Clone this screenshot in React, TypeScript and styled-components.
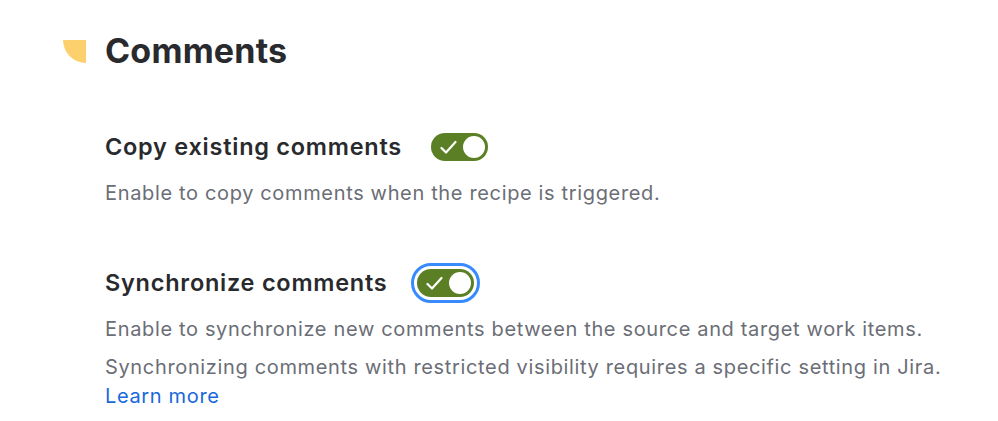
import React, { useState } from "react";
import styled, { createGlobalStyle } from "styled-components";

const Global = createGlobalStyle`
  html, body { margin: 0; padding: 0; background: #ffffff; }
  body { font-family: Inter, "Noto Sans", "Liberation Sans", sans-serif; -webkit-font-smoothing: antialiased; }
`;

const Page = styled.div`
  padding: 31px 0 0 63px;
  display: flex;
  flex-direction: column;
`;

const HeadingRow = styled.div`
  display: flex;
  align-items: center;
  gap: 19px;
  height: 40px;
`;

const Badge = styled.span`
  width: 23px;
  height: 23px;
  background: #fdd06e;
  border-bottom-left-radius: 23px;
  margin-top: 1px;
  flex: none;
`;

const Heading = styled.h2`
  margin: 0;
  font-size: 34px;
  line-height: 40px;
  font-weight: 700;
  color: #292a2e;
  letter-spacing: 0.2px;
`;

const Body = styled.div`
  padding-left: 42px;
  display: flex;
  flex-direction: column;
`;

const Section = styled.section<{ $top: number }>`
  margin-top: ${(p) => p.$top}px;
  display: flex;
  flex-direction: column;
`;

const LabelRow = styled.div`
  display: flex;
  align-items: center;
  gap: 29px;
  height: 28px;
  margin-bottom: 18px;
`;

const Label = styled.label`
  font-size: 23.5px;
  font-weight: 600;
  color: #292a2e;
  line-height: 28px;
  letter-spacing: 0.75px;
`;

const Desc = styled.p<{ $gap?: number }>`
  margin: ${(p) => p.$gap ?? 0}px 0 0 0;
  font-size: 20px;
  line-height: 29px;
  color: #6b6e76;
  letter-spacing: 0.65px;
  max-width: 880px;
`;

const Link = styled.a`
  color: #1868db;
  text-decoration: none;
  display: block;
`;

const ToggleWrap = styled.span<{ $focus?: boolean }>`
  display: inline-flex;
  border-radius: 20px;
  outline: ${(p) => (p.$focus ? "3px solid #388bff" : "none")};
  outline-offset: 3px;
`;

const Toggle = styled.button<{ $on: boolean }>`
  width: 57px;
  height: 28px;
  border: none;
  border-radius: 14px;
  padding: 3px;
  background: ${(p) => (p.$on ? "#5b7f24" : "#8c8f97")};
  display: flex;
  align-items: center;
  justify-content: space-between;
  cursor: pointer;
  outline: none;
`;

const CheckBox = styled.span`
  width: 29px;
  display: flex;
  justify-content: center;
  align-items: center;
`;

const Knob = styled.span`
  width: 22px;
  height: 22px;
  border-radius: 50%;
  background: #ffffff;
  flex: none;
`;

function Switch({ focus }: { focus?: boolean }) {
  const [on, setOn] = useState(true);
  return (
    <ToggleWrap $focus={focus}>
      <Toggle $on={on} onClick={() => setOn(!on)} aria-pressed={on}>
        <CheckBox>
          <svg width="17" height="15" viewBox="0 0 17 15" fill="none">
            <path d="M1.5 8 L6 12.5 L15.5 2" stroke="#ffffff" strokeWidth="2.2" strokeLinecap="round" strokeLinejoin="round" />
          </svg>
        </CheckBox>
        <Knob />
      </Toggle>
    </ToggleWrap>
  );
}

export default function App() {
  return (
    <>
      <Global />
      <Page>
        <HeadingRow>
          <Badge />
          <Heading>Comments</Heading>
        </HeadingRow>
        <Body>
          <Section $top={62}>
            <LabelRow>
              <Label>Copy existing comments</Label>
              <Switch />
            </LabelRow>
            <Desc>Enable to copy comments when the recipe is triggered.</Desc>
          </Section>
          <Section $top={61}>
            <LabelRow>
              <Label>Synchronize comments</Label>
              <Switch focus />
            </LabelRow>
            <Desc>Enable to synchronize new comments between the source and target work items.</Desc>
            <Desc $gap={9}>
              Synchronizing comments with restricted visibility requires a specific setting in Jira.
              <Link href="#">Learn more</Link>
            </Desc>
          </Section>
        </Body>
      </Page>
    </>
  );
}
